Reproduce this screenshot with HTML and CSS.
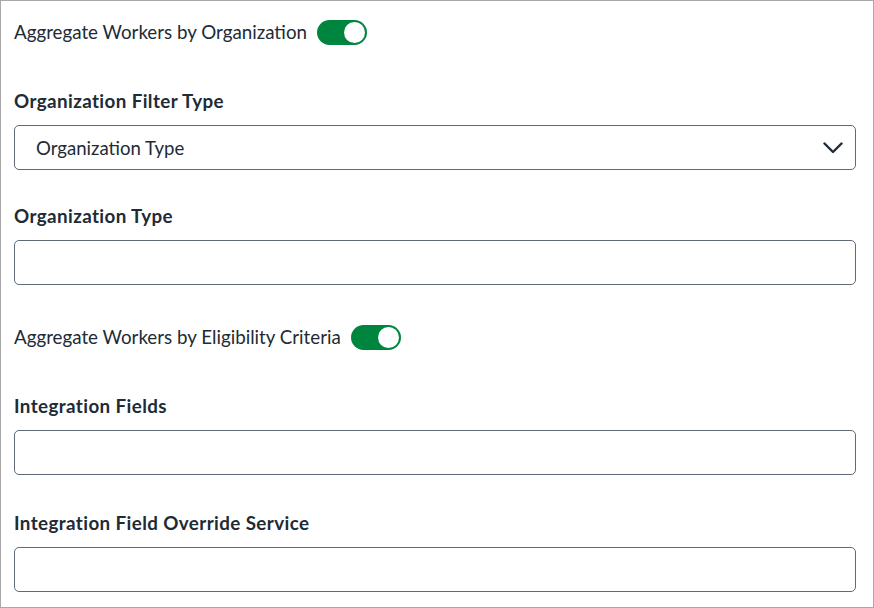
FILE: index.html
```html
<!DOCTYPE html>
<html lang="en">
<head>
<meta charset="utf-8">
<title>Aggregation settings</title>
<link rel="stylesheet" href="styles.css">
</head>
<body>
<div class="panel">
  <div class="toggle-row">
    <span class="toggle-text">Aggregate Workers by Organization</span>
    <span class="switch"><span class="knob"></span></span>
  </div>

  <div class="field field-a">
    <div class="label">Organization Filter Type</div>
    <div class="select">
      <span class="select-value">Organization Type</span>
      <svg class="chevron" width="20" height="12" viewBox="0 0 20 12"><path d="M1.5 1.5 L10 10 L18.5 1.5" fill="none" stroke="#212b36" stroke-width="2.4" stroke-linecap="round" stroke-linejoin="round"/></svg>
    </div>
  </div>

  <div class="field field-b">
    <div class="label">Organization Type</div>
    <div class="input"></div>
  </div>

  <div class="toggle-row toggle-row-2">
    <span class="toggle-text">Aggregate Workers by Eligibility Criteria</span>
    <span class="switch"><span class="knob"></span></span>
  </div>

  <div class="field field-c">
    <div class="label">Integration Fields</div>
    <div class="input"></div>
  </div>

  <div class="field field-d">
    <div class="label">Integration Field Override Service</div>
    <div class="input"></div>
  </div>
</div>
</body>
</html>
```

FILE: styles.css
```css
html, body {
  margin: 0;
  padding: 0;
  background: #ffffff;
}

body {
  font-family: "Lato", "Open Sans", sans-serif;
  color: #212b36;
}

.panel {
  box-sizing: border-box;
  width: 874px;
  height: 608px;
  border: 1px solid #a8a8a8;
  padding: 19px 17px 0 13px;
  display: flex;
  flex-direction: column;
}

.toggle-row {
  display: flex;
  align-items: center;
  gap: 10px;
  height: 25px;
}

.toggle-row-2 {
  margin-top: 40px;
}

.toggle-text {
  font-size: 18.75px;
  line-height: 24px;
  color: #212b36;
  position: relative;
  top: -1px;
}

.switch {
  box-sizing: border-box;
  width: 50px;
  height: 25px;
  border-radius: 13px;
  background: #00853f;
  padding: 2px 2px 2px 27px;
  display: flex;
}

.knob {
  width: 21px;
  height: 21px;
  border-radius: 50%;
  background: #ffffff;
}

.field {
  display: flex;
  flex-direction: column;
  gap: 12px;
}

.field-a { margin-top: 44px; }
.field-b { margin-top: 34px; }
.field-c { margin-top: 44px; }
.field-d { margin-top: 36px; }

.label {
  font-size: 18.8px;
  line-height: 24px;
  font-weight: 700;
  letter-spacing: 0.4px;
  color: #212b36;
}

.select,
.input {
  box-sizing: border-box;
  height: 45px;
  border: 1px solid #5f6b78;
  border-radius: 5px;
  background: #ffffff;
}

.select {
  display: flex;
  align-items: center;
  justify-content: space-between;
  padding: 0 12px 0 21px;
}

.select-value {
  font-size: 18.6px;
  line-height: 24px;
  color: #212b36;
}

.chevron {
  display: block;
}
```
